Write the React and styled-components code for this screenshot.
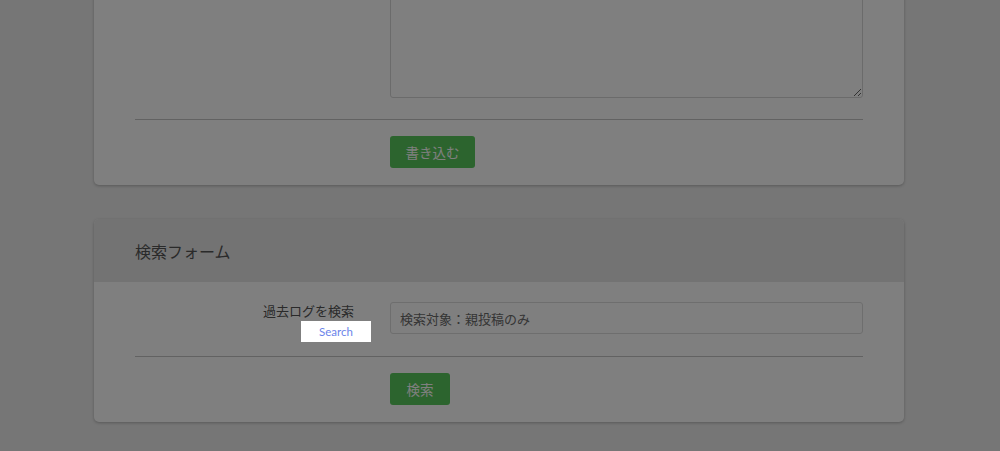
import { styled, createGlobalStyle } from "styled-components";

const GlobalStyle = createGlobalStyle`
   html, body {
      margin: 0;
      padding: 0;
      background: #ececec;
      font-family: "Noto Sans CJK JP", "Noto Sans", sans-serif;
      color: #555;
   }
`;

const Page = styled.div`
   width: 810px;
   margin: -122px 0 0 94px;
   padding-bottom: 40px;
   display: flex;
   flex-direction: column;
   gap: 34px;
`;

const Card = styled.section`
   background: #ffffff;
   border-radius: 5px;
   box-shadow: 0 1px 3px rgba(0, 0, 0, 0.25);
   overflow: hidden;
`;

const CardHeader = styled.header`
   height: 63px;
   background: #e6e6e6;
   display: flex;
   align-items: center;
   padding: 0 41px;
   font-size: 16px;
   color: #555;
`;

const CardBody = styled.div`
   padding: ${({ $top }) => $top}px 41px 17px;
`;

const Row = styled.div`
   display: grid;
   grid-template-columns: 236px 1fr;
   column-gap: 19px;
   margin-bottom: ${({ $gap }) => $gap}px;
`;

const LabelCell = styled.div`
   position: relative;
   text-align: right;
   padding-right: 17px;
   font-size: 13px;
   line-height: 17px;
   color: #555;
`;

const SearchTip = styled.span`
   position: absolute;
   z-index: 20;
   right: 0;
   top: 19px;
   width: 70px;
   height: 21px;
   background: #ffffff;
   color: #6c84ea;
   font-family: "Lato", "Liberation Sans", sans-serif;
   font-size: 11.5px;
   display: flex;
   align-items: center;
   justify-content: center;
`;

const TextArea = styled.textarea`
   display: block;
   box-sizing: border-box;
   width: 100%;
   height: 220px;
   border: 1px solid #d6d6d6;
   border-radius: 3px;
   background: #fff;
   font: inherit;
`;

const Input = styled.input`
   display: block;
   box-sizing: border-box;
   width: 100%;
   height: 32px;
   border: 1px solid #dcdcdc;
   border-radius: 3px;
   background: #fefefe;
   padding: 0 9px;
   font-family: inherit;
   font-size: 13px;
   color: #555;

   &::placeholder {
      color: #6a6a6a;
   }
`;

const Divider = styled.hr`
   margin: 0 0 16px;
   border: none;
   border-top: 1px solid #c4c4c4;
`;

const Actions = styled.div`
   padding-left: 255px;
`;

const Button = styled.button`
   height: 32px;
   width: ${({ $w }) => $w}px;
   border: none;
   border-radius: 3px;
   background: #58c95c;
   color: #fff;
   font-family: inherit;
   font-size: 13.5px;
   padding: 0;
   cursor: pointer;
`;

const Overlay = styled.div`
   position: fixed;
   inset: 0;
   z-index: 10;
   background: rgba(0, 0, 0, 0.5);
`;

export default function App() {
   return (
      <>
         <GlobalStyle />
         <Page>
            <Card>
               <CardBody $top={0}>
                  <Row $gap={21}>
                     <LabelCell />
                     <TextArea />
                  </Row>
                  <Divider />
                  <Actions>
                     <Button $w={85}>書き込む</Button>
                  </Actions>
               </CardBody>
            </Card>
            <Card>
               <CardHeader>検索フォーム</CardHeader>
               <CardBody $top={20}>
                  <Row $gap={22}>
                     <LabelCell>
                        過去ログを検索
                        <SearchTip>Search</SearchTip>
                     </LabelCell>
                     <Input placeholder="検索対象：親投稿のみ" />
                  </Row>
                  <Divider />
                  <Actions>
                     <Button $w={60}>検索</Button>
                  </Actions>
               </CardBody>
            </Card>
         </Page>
         <Overlay />
      </>
   );
}
